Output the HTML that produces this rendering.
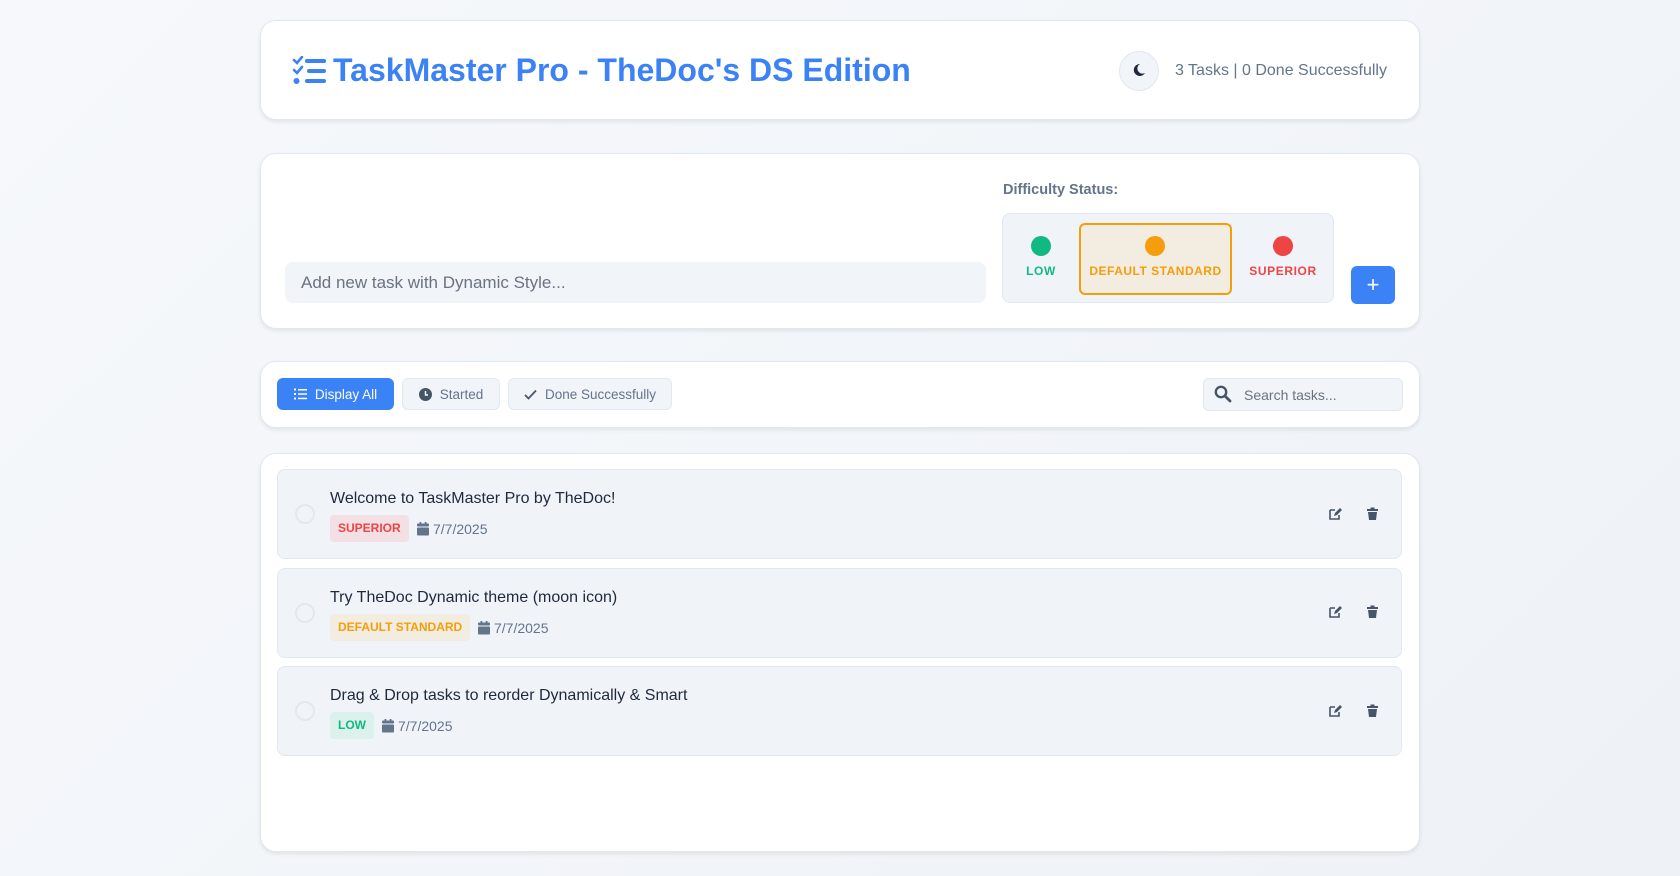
<!DOCTYPE html>
<html><head><meta charset="utf-8"><style>
*{box-sizing:border-box;margin:0;padding:0}
body{width:1680px;height:876px;overflow:hidden;font-family:"Liberation Sans",Arial,sans-serif;background:linear-gradient(135deg,#f6f8fb,#eef2f7);position:relative;color:#1e293b}
.card{position:absolute;left:260px;width:1160px;background:#fff;border:1px solid #e2e8f0;border-radius:16px;box-shadow:0 2px 4px rgba(0,0,0,.08)}
.abs{position:absolute}
.btn{position:absolute;top:378px;height:32px;border-radius:6px;font-size:13.5px;display:flex;align-items:center;justify-content:center;gap:8px;border:1px solid #e2e8f0;background:#f1f5f9;color:#64748b}
.task{position:absolute;left:277px;width:1125px;height:90px;background:#f0f4f9;border:1px solid #e2e8f0;border-radius:8px}
.task .c{position:absolute;left:17px;top:34px;width:20px;height:20px;border-radius:50%;border:2px solid #e2e8f0}
.task .t{position:absolute;left:52px;top:20px;font-size:16px;color:#1e293b}
.task .tag{position:absolute;left:52px;top:45px;height:27px;padding:0 8px;border-radius:4px;font-size:12px;font-weight:bold;line-height:27px}
.date{position:absolute;top:51px;font-size:14px;color:#64748b;display:flex;align-items:center;gap:4px}
</style></head><body>

<div class="card" style="top:20px;height:100px"></div>
<svg class="abs" style="left:292px;top:56px" width="34" height="30" viewBox="0 0 34 30">
<path d="M2 4l3 3 5-6" stroke="#3b82f6" stroke-width="2.6" fill="none" stroke-linecap="round"/>
<path d="M2 14l3 3 5-6" stroke="#3b82f6" stroke-width="2.6" fill="none" stroke-linecap="round"/>
<circle cx="4.5" cy="25" r="3" fill="#3b82f6"/>
<rect x="13" y="3" width="21" height="4" rx="2" fill="#3b82f6"/>
<rect x="15" y="13" width="19" height="4" rx="2" fill="#3b82f6"/>
<rect x="13" y="23" width="21" height="4" rx="2" fill="#3b82f6"/>
</svg>
<div class="abs" style="left:333px;top:52px;font-size:32px;font-weight:bold;color:#3b82f6">TaskMaster Pro - TheDoc's DS Edition</div>
<div class="abs" style="left:1119px;top:51px;width:40px;height:40px;border-radius:50%;background:#f1f5f9;border:1px solid #e2e8f0"></div>
<svg class="abs" style="left:1132px;top:63px" width="14" height="14" viewBox="0 0 14 14"><path d="M8 1a6 6 0 1 0 5 9A5 5 0 0 1 8 1z" fill="#1e293b"/></svg>
<div class="abs" style="left:1175px;top:62px;font-size:16px;color:#64748b">3 Tasks | 0 Done Successfully</div>

<div class="card" style="top:153px;height:176px"></div>
<div class="abs" style="left:1003px;top:182px;font-size:14.5px;font-weight:bold;color:#64748b">Difficulty Status:</div>
<div class="abs" style="left:285px;top:262px;width:701px;height:41px;background:#f1f5f9;border-radius:8px;font-size:17px;color:#6b7280;padding:11px 16px">Add new task with Dynamic Style...</div>
<div class="abs" style="left:1002px;top:213px;width:332px;height:90px;background:#f0f4f9;border:1px solid #e2e8f0;border-radius:8px"></div>
<div class="abs" style="left:1079px;top:223px;width:153px;height:72px;background:#f3ece1;border:2px solid #f59e0b;border-radius:6px"></div>
<div class="abs" style="left:1031px;top:236px;width:20px;height:20px;border-radius:50%;background:#10b981"></div>
<div class="abs" style="left:1145px;top:236px;width:20px;height:20px;border-radius:50%;background:#f59e0b"></div>
<div class="abs" style="left:1273px;top:236px;width:20px;height:20px;border-radius:50%;background:#ef4444"></div>
<div class="abs" style="left:1001px;top:264px;width:80px;text-align:center;font-size:12px;font-weight:bold;letter-spacing:.6px;color:#10b981">LOW</div>
<div class="abs" style="left:1079px;top:264px;width:153px;text-align:center;font-size:12px;font-weight:bold;letter-spacing:.5px;color:#f59e0b">DEFAULT STANDARD</div>
<div class="abs" style="left:1233px;top:264px;width:100px;text-align:center;font-size:12px;font-weight:bold;letter-spacing:.6px;color:#ef4444">SUPERIOR</div>
<div class="abs" style="left:1351px;top:266px;width:44px;height:38px;background:#3b82f6;border-radius:6px;color:#fff;font-size:22px;text-align:center;line-height:37px">+</div>

<div class="card" style="top:361px;height:67px"></div>
<div class="btn" style="left:277px;width:117px;background:#3b82f6;border-color:#3b82f6;color:#fff">
<svg width="13" height="12" viewBox="0 0 13 12"><g fill="#fff"><rect x="0" y="0.5" width="2" height="2"/><rect x="0" y="5" width="2" height="2"/><rect x="0" y="9.5" width="2" height="2"/><rect x="4" y="1" width="9" height="1.5"/><rect x="4" y="5.3" width="9" height="1.5"/><rect x="4" y="9.7" width="9" height="1.5"/></g></svg>Display All</div>
<div class="btn" style="left:402px;width:98px"><svg width="13" height="13" viewBox="0 0 13 13"><circle cx="6.5" cy="6.5" r="6.5" fill="#475569"/><path d="M6.5 3v4h2.5" stroke="#fff" stroke-width="1.4" fill="none"/></svg>Started</div>
<div class="btn" style="left:508px;width:164px"><svg width="13" height="11" viewBox="0 0 13 11"><path d="M1 6l3.5 3.5L12 1.5" stroke="#475569" stroke-width="1.8" fill="none"/></svg>Done Successfully</div>
<div class="abs" style="left:1203px;top:378px;width:200px;height:33px;background:#f1f5f9;border:1px solid #e2e8f0;border-radius:6px"></div>
<svg class="abs" style="left:1214px;top:385px" width="18" height="18" viewBox="0 0 18 18"><circle cx="7" cy="7" r="5.2" stroke="#475569" stroke-width="2.4" fill="none"/><path d="M11 11l5 5" stroke="#475569" stroke-width="2.8" stroke-linecap="round"/></svg>
<div class="abs" style="left:1244px;top:387px;font-size:14px;color:#6b7280">Search tasks...</div>

<div class="card" style="top:453px;height:399px"></div>

<svg width="0" height="0" style="position:absolute"><defs>
<g id="cal"><rect x="2.5" y="0" width="1.8" height="3" fill="#64748b"/><rect x="7.7" y="0" width="1.8" height="3" fill="#64748b"/><rect x="0" y="1.5" width="12" height="3" rx="1" fill="#64748b"/><rect x="0" y="5.5" width="12" height="8" rx="1" fill="#64748b"/></g>
<g id="ed"><path d="M1 3h5M1 3v9h9V8" stroke="#475569" stroke-width="1.6" fill="none"/><path d="M5 9l1-3 5-5 2 2-5 5z" fill="#475569"/></g>
<g id="tr"><rect x="1" y="2" width="11" height="2" fill="#475569"/><rect x="4.5" y="0.5" width="4" height="2" fill="#475569"/><path d="M2 5h9l-1 8H3z" fill="#475569"/></g>
</defs></svg>

<div class="task" style="top:469px"><div class="c"></div><div class="t">Welcome to TaskMaster Pro by TheDoc!</div><div class="tag" style="background:#f3e0e4;color:#ef4444">SUPERIOR</div><div class="date" style="left:139px"><svg width="12" height="14"><use href="#cal"/></svg>7/7/2025</div></div>
<div class="task" style="top:568px"><div class="c"></div><div class="t">Try TheDoc Dynamic theme (moon icon)</div><div class="tag" style="background:#f3ece1;color:#f59e0b">DEFAULT STANDARD</div><div class="date" style="left:200px"><svg width="12" height="14"><use href="#cal"/></svg>7/7/2025</div></div>
<div class="task" style="top:666px"><div class="c"></div><div class="t">Drag &amp; Drop tasks to reorder Dynamically &amp; Smart</div><div class="tag" style="background:#dcf0ec;color:#10b981">LOW</div><div class="date" style="left:104px"><svg width="12" height="14"><use href="#cal"/></svg>7/7/2025</div></div>

<svg class="abs" style="left:1329px;top:507px" width="14" height="14"><use href="#ed"/></svg>
<svg class="abs" style="left:1366px;top:507px" width="13" height="14"><use href="#tr"/></svg>
<svg class="abs" style="left:1329px;top:605px" width="14" height="14"><use href="#ed"/></svg>
<svg class="abs" style="left:1366px;top:605px" width="13" height="14"><use href="#tr"/></svg>
<svg class="abs" style="left:1329px;top:704px" width="14" height="14"><use href="#ed"/></svg>
<svg class="abs" style="left:1366px;top:704px" width="13" height="14"><use href="#tr"/></svg>
</body></html>
